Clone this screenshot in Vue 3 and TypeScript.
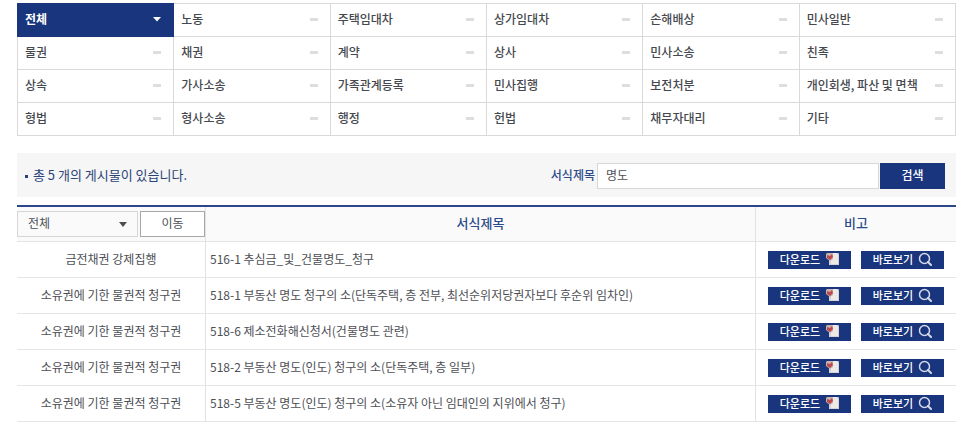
<script setup lang="ts">
import { ref } from 'vue'

interface FormRow {
  category: string
  title: string
}

const categories: string[] = [
  '전체', '노동', '주택임대차', '상가임대차', '손해배상', '민사일반',
  '물권', '채권', '계약', '상사', '민사소송', '친족',
  '상속', '가사소송', '가족관계등록', '민사집행', '보전처분', '개인회생, 파산 및 면책',
  '형법', '형사소송', '행정', '헌법', '채무자대리', '기타',
]

const rows: FormRow[] = [
  { category: '금전채권 강제집행', title: '516-1 추심금_및_건물명도_청구' },
  { category: '소유권에 기한 물권적 청구권', title: '518-1 부동산 명도 청구의 소(단독주택, 층 전부, 최선순위저당권자보다 후순위 임차인)' },
  { category: '소유권에 기한 물권적 청구권', title: '518-6 제소전화해신청서(건물명도 관련)' },
  { category: '소유권에 기한 물권적 청구권', title: '518-2 부동산 명도(인도) 청구의 소(단독주택, 층 일부)' },
  { category: '소유권에 기한 물권적 청구권', title: '518-5 부동산 명도(인도) 청구의 소(소유자 아닌 임대인의 지위에서 청구)' },
]

const active = ref('전체')
const keyword = ref('명도')
const filter = ref('전체')
</script>

<template>
  <main class="page">
    <nav class="categories">
      <a
        v-for="name in categories"
        :key="name"
        href="#"
        class="category"
        :class="{ active: name === active }"
        @click.prevent="active = name"
      >
        <span>{{ name }}</span>
        <svg v-if="name === active" class="mark" viewBox="0 0 8 6" aria-hidden="true">
          <path d="M0 1h8L4 5.5z" fill="#fff" />
        </svg>
        <svg v-else class="mark" viewBox="0 0 8 6" aria-hidden="true">
          <path d="M0 2h8v3H0z" fill="#dedede" />
        </svg>
      </a>
    </nav>

    <form class="search" @submit.prevent>
      <p class="total"><i class="dot"></i>총 {{ rows.length }} 개의 게시물이 있습니다.</p>
      <label for="keyword" class="search-label">서식제목</label>
      <input id="keyword" v-model="keyword" type="text" class="search-input" />
      <button type="submit" class="search-button">검색</button>
    </form>

    <table class="forms">
      <colgroup>
        <col class="col-category" />
        <col />
        <col class="col-actions" />
      </colgroup>
      <thead>
        <tr>
          <th scope="col">
            <div class="filter">
              <div class="select-box">
                <select v-model="filter" aria-label="분류">
                  <option>전체</option>
                </select>
                <svg class="arrow" viewBox="0 0 8 5" aria-hidden="true">
                  <path d="M0 0h8L4 5z" fill="#4d4f55" />
                </svg>
              </div>
              <button type="button" class="go">이동</button>
            </div>
          </th>
          <th scope="col" class="heading">서식제목</th>
          <th scope="col" class="heading">비고</th>
        </tr>
      </thead>
      <tbody>
        <tr v-for="row in rows" :key="row.title">
          <td class="center">{{ row.category }}</td>
          <td class="title">{{ row.title }}</td>
          <td class="action-cell">
            <div class="actions">
              <button type="button" class="action">
                다운로드
                <svg class="icon" viewBox="0 0 14 14" aria-hidden="true">
                  <path d="M4 1h10v12H4z" fill="#d4d3d2" />
                  <path d="M6 1h7v11H6z" fill="#eceae7" />
                  <path d="M12 1h2v2z" fill="#a9adbd" />
                  <path d="M2 1h6v6L5 9 1 6V2z" fill="#cbb0ae" />
                  <path d="M2 3l3 1 2-2 1 3-3 3-3-2z" fill="#b94b4e" />
                </svg>
              </button>
              <button type="button" class="action">
                바로보기
                <svg class="icon" viewBox="0 0 14 14" aria-hidden="true">
                  <circle cx="6.5" cy="6.5" r="5" fill="none" stroke="#d5daea" stroke-width="1.5" />
                  <path d="M10 10l3 3" stroke="#d5daea" stroke-width="2" stroke-linecap="round" />
                </svg>
              </button>
            </div>
          </td>
        </tr>
      </tbody>
    </table>
  </main>
</template>

<style>
body {
  margin: 0;
  background: #fff;
}
</style>

<style scoped>
.page {
  padding: 3px 10px 8px 17px;
  font-family: "Noto Sans CJK KR", "Noto Sans", sans-serif;
  font-size: 12px;
  line-height: 18px;
  color: #4d4f55;
}

.page *,
.page {
  box-sizing: border-box;
}

button,
input,
select {
  margin: 0;
  padding: 0;
  border-radius: 0;
  font: inherit;
  color: inherit;
}

.categories {
  display: grid;
  grid-template-columns: repeat(6, 1fr);
  border-top: 1px solid #d9d9d9;
  border-left: 1px solid #d9d9d9;
}

.category {
  display: flex;
  align-items: center;
  justify-content: space-between;
  height: 33px;
  padding: 0 12px 2px 7px;
  border-right: 1px solid #d9d9d9;
  border-bottom: 1px solid #d9d9d9;
  color: #45484e;
  font-weight: 500;
  text-decoration: none;
}

.category.active {
  margin: -1px 0 0 -1px;
  height: 34px;
  padding-left: 8px;
  border-color: #19357d;
  background: #19357d;
  color: #fff;
  font-weight: 700;
}

.mark {
  width: 8px;
  height: 6px;
}

.search {
  display: flex;
  align-items: center;
  margin-top: 17px;
  height: 44px;
  padding: 1px 11px 0 8px;
  background: #f6f6f6;
}

.total {
  display: flex;
  align-items: center;
  margin: 0 auto 0 0;
  padding-bottom: 2px;
  font-size: 13px;
  color: #2b4478;
}

.dot {
  width: 3px;
  height: 3px;
  margin: 4px 5px 0 0;
  background: #2b4478;
}

.search-label {
  padding-bottom: 2px;
  color: #2b4a8c;
  font-weight: 500;
}

.search-input {
  width: 282px;
  height: 26px;
  margin: 0 1px 0 2px;
  padding: 0 8px 2px;
  border: 1px solid #d5d7da;
  background: #fff;
}

.search-button {
  width: 65px;
  height: 26px;
  padding-bottom: 2px;
  border: 0;
  background: #19357d;
  color: #fff;
  font-weight: 500;
}

.forms {
  width: 100%;
  margin-top: 8px;
  border-collapse: separate;
  border-spacing: 0;
  border-top: 2px solid #2b4689;
  table-layout: fixed;
}

.col-category {
  width: 188px;
}

.col-actions {
  width: 201px;
}

th,
td {
  height: 36px;
  padding: 0 0 2px;
  border-bottom: 1px solid #e5e5e5;
}

th + th,
td + td {
  border-left: 1px solid #e2e2e2;
}

th {
  height: 35px;
  padding: 0;
  background: #fafafa;
  color: #2b4a8c;
  font-size: 13px;
  font-weight: 500;
}

.heading {
  padding-bottom: 2px;
}

.filter {
  display: flex;
  gap: 2px;
  color: #4d4f55;
  font-size: 12px;
  font-weight: 400;
}

.select-box {
  position: relative;
  flex: 1;
}

select {
  display: block;
  width: 100%;
  height: 26px;
  padding: 0 10px 2px;
  border: 1px solid #d6d6d6;
  background: #fafafa;
  appearance: none;
}

.arrow {
  position: absolute;
  top: 11px;
  right: 11px;
  width: 8px;
  height: 5px;
  pointer-events: none;
}

.go {
  width: 65px;
  height: 26px;
  padding-bottom: 2px;
  border: 1px solid #a6a7aa;
  background: #fff;
}

.center {
  text-align: center;
}

.title {
  padding-left: 4px;
}

.action-cell {
  padding: 0;
}

.actions {
  display: flex;
  justify-content: center;
  gap: 10px;
}

.action {
  display: flex;
  align-items: center;
  justify-content: center;
  gap: 5px;
  width: 83px;
  height: 18px;
  padding-bottom: 1px;
  border: 0;
  background: #19357d;
  color: #fff;
  font-size: 11px;
  font-weight: 500;
}

.icon {
  width: 14px;
  height: 14px;
}
</style>
